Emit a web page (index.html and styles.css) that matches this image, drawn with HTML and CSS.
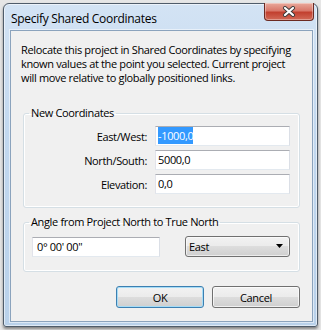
FILE: index.html
```html
<!DOCTYPE html>
<html>
<head>
<meta charset="utf-8">
<link rel="stylesheet" href="styles.css">
</head>
<body>
<div class="window">
  <div class="titlebar">
    <span class="title">Specify Shared Coordinates</span>
    <div class="close">
      <svg width="14" height="11" viewBox="0 0 14 11">
        <path d="M3 2 L11 9 M11 2 L3 9" stroke="#3a3a3a" stroke-width="4" stroke-linecap="round"/>
        <path d="M3 2 L11 9 M11 2 L3 9" stroke="#ffffff" stroke-width="2.2" stroke-linecap="round"/>
      </svg>
    </div>
  </div>
  <div class="client">
    <p class="intro">Relocate this project in Shared Coordinates by specifying known values at the point you selected. Current project will move relative to globally positioned links.</p>
    <fieldset class="group coords">
      <legend>New Coordinates</legend>
      <div class="grid">
        <label>East/West:</label>
        <div class="textbox"><span class="sel">-1000,0</span></div>
        <label>North/South:</label>
        <div class="textbox">5000,0</div>
        <label>Elevation:</label>
        <div class="textbox">0,0</div>
      </div>
    </fieldset>
    <fieldset class="group angle">
      <legend>Angle from Project North to True North</legend>
      <div class="row">
        <div class="textbox angle-box">0° 00' 00"</div>
        <div class="combo">
          <span>East</span>
          <svg width="8" height="5" viewBox="0 0 8 5"><path d="M0 0 H7 L3.5 4 Z" fill="#000"/></svg>
        </div>
      </div>
    </fieldset>
    <div class="buttons">
      <div class="btn default">OK</div>
      <div class="btn">Cancel</div>
    </div>
  </div>
</div>
</body>
</html>
```
FILE: styles.css
```css
html, body {
  margin: 0;
  padding: 0;
}
body {
  width: 321px;
  height: 330px;
  background: #e6e6e6;
  font-family: "Open Sans", "Noto Sans", sans-serif;
  font-size: 11px;
  letter-spacing: -0.35px;
  color: #000;
  overflow: hidden;
}
.window {
  box-sizing: border-box;
  width: 315px;
  height: 324px;
  margin: 3px 0 0 3px;
  border: 1px solid #4f5c6a;
  border-radius: 6px 6px 3px 3px;
  background: linear-gradient(to bottom, #d3e3f4 0%, #c2d8ef 40%, #b9d1ea 100%);
  box-shadow: inset 0 0 0 1px rgba(255,255,255,0.55), 0 2px 3px rgba(0,0,0,0.45);
  display: flex;
  flex-direction: column;
}
.titlebar {
  height: 26px;
  display: flex;
  justify-content: space-between;
  align-items: flex-start;
}
.title {
  margin: 7px 0 0 7px;
  font-size: 12px;
  letter-spacing: -0.3px;
  line-height: 16px;
}
.close {
  width: 48px;
  height: 17px;
  margin: -1px 3px 0 0;
  border: 1px solid #6b2a22;
  border-top: none;
  border-radius: 0 0 4px 4px;
  background: linear-gradient(to bottom, #e9a99b 0%, #d9786a 45%, #c2402f 55%, #d26a57 100%);
  box-shadow: inset 0 0 0 1px rgba(255,255,255,0.35);
  display: flex;
  align-items: center;
  justify-content: center;
}
.client {
  flex: 1;
  margin: 0 4px 4px 6px;
  border: 1px solid #8ba3bd;
  background: #f0f0f0;
  box-shadow: 0 0 0 1px rgba(255,255,255,0.5);
  display: flex;
  flex-direction: column;
}
.intro {
  margin: 12px 10px 0 10px;
  line-height: 14px;
}
.group {
  margin: 0 12px;
  border: 1px solid #d5dfe5;
  border-radius: 3px;
  box-shadow: inset 0 0 0 1px #fff;
  padding: 0;
  min-width: 0;
}
.group legend {
  margin-left: 5px;
  padding: 0 2px;
  line-height: 14px;
}
.coords {
  margin-top: 21px;
}
.grid {
  display: grid;
  grid-template-columns: 1fr 135px;
  column-gap: 8px;
  row-gap: 4px;
  align-items: center;
  padding: 6px 9px 13px 0;
}
.grid label {
  text-align: right;
}
.textbox {
  box-sizing: border-box;
  height: 20px;
  background: #fff;
  border: 1px solid;
  border-color: #abadb3 #dbdfe6 #e3e9ef #e2e3ea;
  padding: 0 2px;
  line-height: 18px;
  white-space: nowrap;
}
.sel {
  background: #3399ff;
  color: #fff;
  padding: 1px 0;
}
.angle {
  margin-top: 7px;
}
.row {
  display: flex;
  justify-content: space-between;
  align-items: center;
  padding: 7px 9px 14px 8px;
}
.angle-box {
  width: 128px;
  padding-left: 4px;
}
.combo {
  box-sizing: border-box;
  width: 105px;
  height: 21px;
  border: 1px solid #707070;
  border-radius: 3px;
  background: linear-gradient(to bottom, #f2f2f2 0%, #ebebeb 50%, #dddddd 50%, #cfcfcf 100%);
  box-shadow: inset 0 0 0 1px rgba(255,255,255,0.6);
  display: flex;
  align-items: center;
  justify-content: space-between;
  padding: 0 5px 0 3px;
}
.buttons {
  margin: 14px 12px 0 0;
  display: flex;
  justify-content: flex-end;
  gap: 8px;
}
.btn {
  box-sizing: border-box;
  width: 88px;
  height: 22px;
  border: 1px solid #707070;
  border-radius: 3px;
  background: linear-gradient(to bottom, #f2f2f2 0%, #ebebeb 50%, #dddddd 50%, #cfcfcf 100%);
  box-shadow: inset 0 0 0 1px rgba(255,255,255,0.7);
  display: flex;
  align-items: center;
  justify-content: center;
}
.btn.default {
  border-color: #3c7fb1;
  box-shadow: inset 0 0 0 1px #a6dcf6;
}
```
